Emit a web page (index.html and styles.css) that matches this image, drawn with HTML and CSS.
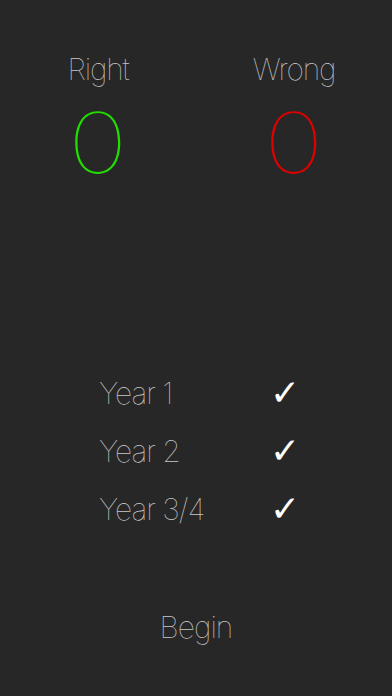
FILE: index.html
```html
<!DOCTYPE html>
<html>
<head>
<meta charset="utf-8">
<link rel="stylesheet" href="styles.css">
</head>
<body>
<main class="screen">
  <section class="scores">
    <div class="score">
      <div class="score-label">Right</div>
      <div class="score-value right">0</div>
    </div>
    <div class="score">
      <div class="score-label">Wrong</div>
      <div class="score-value wrong">0</div>
    </div>
  </section>
  <section class="years">
    <div class="year-row"><span class="year-label">Year 1</span><span class="year-check">✓</span></div>
    <div class="year-row"><span class="year-label">Year 2</span><span class="year-check">✓</span></div>
    <div class="year-row"><span class="year-label">Year 3/4</span><span class="year-check">✓</span></div>
  </section>
  <div class="begin">Begin</div>
</main>
</body>
</html>
```
FILE: styles.css
```css
html, body {
  margin: 0;
  padding: 0;
  background: #272727;
}
.screen {
  width: 392px;
  height: 696px;
  display: flex;
  flex-direction: column;
  font-family: Inter, "Liberation Sans", sans-serif;
  font-weight: 100;
  color: #c8c8c8;
  overflow: hidden;
}
.scores {
  display: grid;
  grid-template-columns: 1fr 1fr;
  padding-top: 51px;
}
.score {
  display: flex;
  flex-direction: column;
  align-items: center;
}
.score-label {
  font-size: 30px;
  line-height: 36px;
  letter-spacing: -1.2px;
}
.score-value {
  font-size: 84px;
  line-height: 84px;
  font-weight: 100;
  margin-top: 14px;
  transform: scaleX(1.2);
}
.score-value.right { color: #22dd00; }
.score-value.wrong { color: #e00000; }
.years {
  margin-top: 190px;
  display: flex;
  flex-direction: column;
  gap: 22px;
}
.year-row {
  display: flex;
  align-items: center;
  padding-left: 99px;
  height: 36px;
}
.year-label {
  width: 171px;
  font-size: 30px;
  line-height: 36px;
  letter-spacing: -1px;
}
.year-check {
  font-family: "DejaVu Sans", sans-serif;
  font-weight: bold;
  font-size: 36px;
  line-height: 36px;
  color: #ffffff;
}
.begin {
  margin-top: 82px;
  text-align: center;
  font-size: 30px;
  line-height: 36px;
  letter-spacing: -1px;
}
```
